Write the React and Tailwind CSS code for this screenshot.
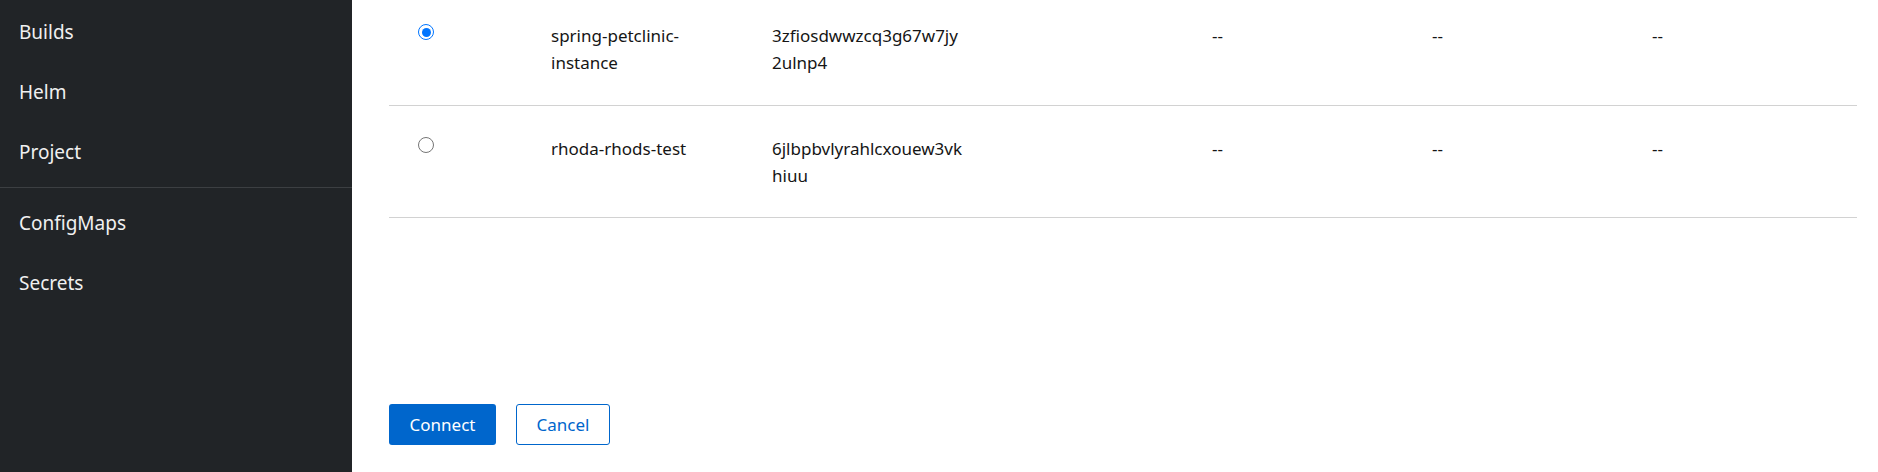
import React, { useState } from 'react';

const navTop = ['Builds', 'Helm', 'Project'];
const navBottom = ['ConfigMaps', 'Secrets'];

const rows = [
  { id: 'spring', nameLines: ['spring-petclinic-', 'instance'], keyLines: ['3zfiosdwwzcq3g67w7jy', '2ulnp4'] },
  { id: 'rhoda', nameLines: ['rhoda-rhods-test'], keyLines: ['6jlbpbvlyrahlcxouew3vk', 'hiuu'] },
];

function Radio({ checked, onChange }) {
  return (
    <button
      type="button"
      onClick={onChange}
      className={`mt-[2px] w-[16px] h-[16px] rounded-full border flex items-center justify-center bg-white ${
        checked ? 'border-[#0075ff] border-[1.5px]' : 'border-[#767676]'
      }`}
    >
      {checked && <span className="w-[9px] h-[9px] rounded-full bg-[#0075ff]" />}
    </button>
  );
}

export default function App() {
  const [selected, setSelected] = useState('spring');

  return (
    <div className="flex h-[472px] w-full bg-white" style={{ fontFamily: '"Noto Sans", "Liberation Sans", sans-serif' }}>
      {/* sidebar */}
      <nav className="w-[352px] shrink-0 bg-[#212427] text-[#f0f0f0] text-[19px]">
        <ul className="pt-[2px]">
          {navTop.map((item) => (
            <li key={item} className="px-[19px] py-[14px] leading-[32px]">{item}</li>
          ))}
        </ul>
        <div className="border-t border-[#3c3f42] mt-[5px]" />
        <ul className="pt-[5px]">
          {navBottom.map((item) => (
            <li key={item} className="px-[19px] py-[14px] leading-[32px]">{item}</li>
          ))}
        </ul>
      </nav>

      {/* main */}
      <main className="flex-1 flex flex-col pl-[37px] pr-[21px] text-[17px] text-[#151515]">
        <div className="flex flex-col">
          {rows.map((row, i) => (
            <div
              key={row.id}
              className={`grid grid-cols-[162px_221px_440px_220px_220px_1fr] border-b border-[#d2d2d2] leading-[27px] ${
                i === 0 ? 'pt-[22px] pb-[29px]' : 'pt-[29px] pb-[28px]'
              }`}
            >
              <div className="pl-[29px]">
                <Radio checked={selected === row.id} onChange={() => setSelected(row.id)} />
              </div>
              <div>
                {row.nameLines.map((l) => (
                  <div key={l}>{l}</div>
                ))}
              </div>
              <div>
                {row.keyLines.map((l) => (
                  <div key={l}>{l}</div>
                ))}
              </div>
              <div>--</div>
              <div>--</div>
              <div>--</div>
            </div>
          ))}
        </div>

        <div className="mt-[186px] flex gap-[20px]">
          <button className="w-[107px] h-[41px] rounded-[3px] bg-[#0066cc] text-white text-[17px]">Connect</button>
          <button className="w-[94px] h-[41px] rounded-[3px] border border-[#0066cc] text-[#0066cc] text-[17px] bg-white">Cancel</button>
        </div>
      </main>
    </div>
  );
}
